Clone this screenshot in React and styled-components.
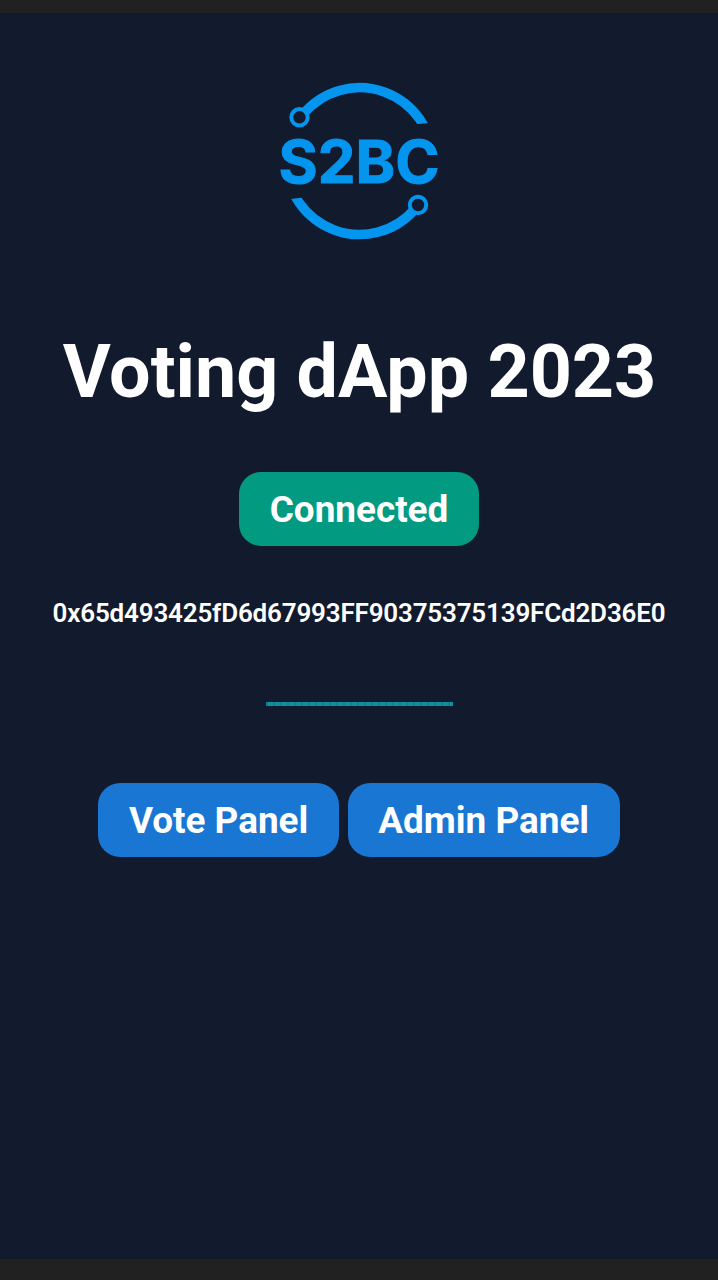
import React from "react";
import styled, { createGlobalStyle } from "styled-components";

const GlobalStyle = createGlobalStyle`
  * { box-sizing: border-box; }
  body { margin: 0; background: #121a2d; }
`;

const Page = styled.main`
  display: flex;
  flex-direction: column;
  align-items: center;
  height: 1280px;
  overflow: hidden;
  border-top: 13px solid #212121;
  border-bottom: 21px solid #212121;
  background: #121a2d;
  color: #fff;
  font-family: Roboto, "Liberation Sans", sans-serif;
  font-weight: 700;
  white-space: nowrap;
`;

const Logo = styled.svg`
  flex: none;
  width: 180px;
  height: 180px;
  margin-top: 57px;
`;

const Wordmark = styled.text`
  font: 700 59px Inter, "Liberation Sans", sans-serif;
  fill: #0495ef;
  stroke: #0495ef;
  stroke-width: 1px;
`;

const Title = styled.h1`
  margin: 79px 0 0;
  padding-left: 1px;
  font-size: 73.6px;
  line-height: 87px;
`;

const Button = styled.button`
  height: 74px;
  padding: 0 30.5px;
  border: 0;
  border-radius: 22px;
  background: ${({ $tone }) => ($tone === "success" ? "#029b82" : "#1976d2")};
  color: #fff;
  font: inherit;
  font-size: 36.9px;
  line-height: 73px;
`;

const Status = styled.div`
  display: flex;
  margin-top: 56px;
`;

const Address = styled.p`
  margin: 51px 0 0;
  font-size: 26px;
  line-height: 32px;
  font-weight: 600;
  letter-spacing: -0.18px;
`;

const Divider = styled.hr`
  flex: none;
  width: 187px;
  height: 4px;
  margin: 73px 0 0;
  border: 0;
  background: repeating-linear-gradient(90deg, #0e8294 0 2px, #128f9f 2px 7px);
`;

const Actions = styled.div`
  display: flex;
  gap: 9px;
  margin-top: 77px;
`;

export default function App() {
  return (
    <>
      <GlobalStyle />
      <Page>
        <Logo viewBox="269 70 180 180" role="img" aria-label="S2BC">
          <defs>
            <clipPath id="upper"><path d="M270 70H450V122.5L427.5 123.2L415 124.2H270Z" /></clipPath>
            <clipPath id="lower"><path d="M270 199.5L291 199L301 197.8H450V250H270Z" /></clipPath>
          </defs>
          <g fill="none" stroke="#0495ef">
            <path d="M303 114.3A73.2 73.2 0 0 1 432.7 161" strokeWidth="9.6" clipPath="url(#upper)" />
            <path d="M286.3 161.3A73.2 73.2 0 0 0 415 209" strokeWidth="9.6" clipPath="url(#lower)" />
            <circle cx="299.5" cy="117.3" r="8.2" strokeWidth="4" fill="#121a2d" />
            <circle cx="418" cy="205" r="8.2" strokeWidth="4" fill="#121a2d" />
          </g>
          <Wordmark x="278.5" y="182.8" textLength="161" lengthAdjust="spacingAndGlyphs">S2BC</Wordmark>
        </Logo>
        <Title>Voting dApp 2023</Title>
        <Status><Button $tone="success">Connected</Button></Status>
        <Address>0x65d493425fD6d67993FF90375375139FCd2D36E0</Address>
        <Divider />
        <Actions>
          <Button>Vote Panel</Button>
          <Button>Admin Panel</Button>
        </Actions>
      </Page>
    </>
  );
}
